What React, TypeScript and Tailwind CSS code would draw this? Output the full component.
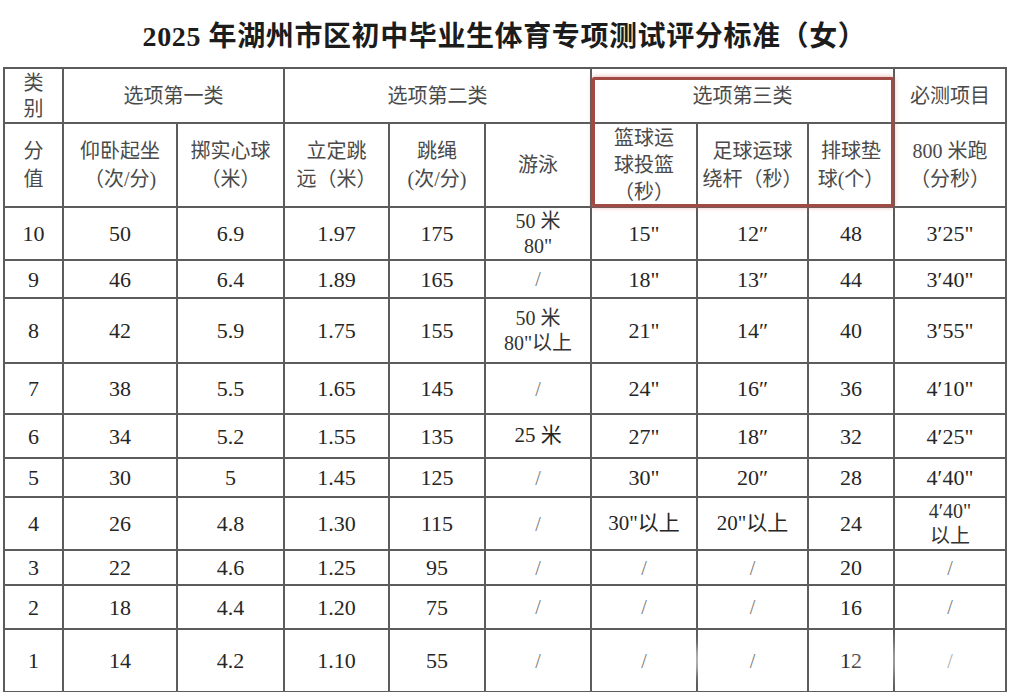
import React from "react";

type Cell = string | string[];

const cols = [59, 114, 107, 105, 96, 106, 106, 111, 86, 112];

const body: { h: number; cells: Cell[] }[] = [
  { h: 53, cells: ["10", "50", "6.9", "1.97", "175", ["50 米", "80\""], "15\"", "12″", "48", "3′25\""] },
  { h: 38, cells: ["9", "46", "6.4", "1.89", "165", "/", "18\"", "13″", "44", "3′40\""] },
  { h: 65, cells: ["8", "42", "5.9", "1.75", "155", ["50 米", "80\"以上"], "21\"", "14″", "40", "3′55\""] },
  { h: 51, cells: ["7", "38", "5.5", "1.65", "145", "/", "24\"", "16″", "36", "4′10\""] },
  { h: 44, cells: ["6", "34", "5.2", "1.55", "135", "25 米", "27\"", "18″", "32", "4′25\""] },
  { h: 39, cells: ["5", "30", "5", "1.45", "125", "/", "30\"", "20″", "28", "4′40\""] },
  { h: 53, cells: ["4", "26", "4.8", "1.30", "115", "/", "30\"以上", "20\"以上", "24", ["4′40\"", "以上"]] },
  { h: 35, cells: ["3", "22", "4.6", "1.25", "95", "/", "/", "/", "20", "/"] },
  { h: 44, cells: ["2", "18", "4.4", "1.20", "75", "/", "/", "/", "16", "/"] },
  { h: 63, cells: ["1", "14", "4.2", "1.10", "55", "/", "/", "/", "12", "/"] },
];

const td = "border-2 border-[#5c5c5c] p-0 text-center align-middle";

function Lines({ lines, lh = "leading-[27px]" }: { lines: string[]; lh?: string }) {
  return (
    <div className={`flex flex-col items-center ${lh}`}>
      {lines.map((l, i) => (
        <span key={i} className="whitespace-nowrap">
          {l}
        </span>
      ))}
    </div>
  );
}

function DataCell({ c }: { c: Cell }) {
  if (Array.isArray(c)) {
    return (
      <td className={`${td} text-[20px] text-[#333]`}>
        <Lines lines={c} lh="leading-[25px]" />
      </td>
    );
  }
  if (c === "/") {
    return <td className={`${td} text-[20px] text-[#777]`}>/</td>;
  }
  const hasCjk = /[\u4e00-\u9fff]/.test(c);
  return (
    <td className={`${td} whitespace-nowrap ${hasCjk ? "text-[21px]" : "text-[22px]"} text-[#262626]`}>{c}</td>
  );
}

export default function App() {
  return (
    <div className="h-[692px] w-[1009px] overflow-hidden bg-white font-['Liberation_Serif','Noto_Sans_CJK_SC',serif]">
      <div className="flex h-[67px] items-center justify-center pt-[6px]">
        <h1 className="text-[28px] font-bold tracking-[0.6px] text-[#1c1c1c]">
          2025 年湖州市区初中毕业生体育专项测试评分标准（女）
        </h1>
      </div>

      <div className="relative ml-[3px] w-[1002px]">
        <table className="w-[1002px] table-fixed border-collapse">
          <colgroup>
            {cols.map((w, i) => (
              <col key={i} style={{ width: w }} />
            ))}
          </colgroup>
          <tbody className="text-[#4a4a4a]">
            <tr className="h-[55px] text-[20px]">
              <td className={td}>
                <Lines lines={["类", "别"]} lh="leading-[26px]" />
              </td>
              <td className={td} colSpan={2}>选项第一类</td>
              <td className={td} colSpan={3}>选项第二类</td>
              <td className={td} colSpan={3}>选项第三类</td>
              <td className={td}>必测项目</td>
            </tr>
            <tr className="h-[84px] text-[20px]">
              <td className={td}>
                <Lines lines={["分", "值"]} lh="leading-[28px]" />
              </td>
              <td className={td}>
                <Lines lines={["仰卧起坐", "（次/分)"]} lh="leading-[28px]" />
              </td>
              <td className={td}>
                <Lines lines={["掷实心球", "（米）"]} lh="leading-[28px]" />
              </td>
              <td className={td}>
                <Lines lines={["立定跳", "远（米）"]} lh="leading-[28px]" />
              </td>
              <td className={td}>
                <Lines lines={["跳绳", "(次/分)"]} lh="leading-[28px]" />
              </td>
              <td className={td}>游泳</td>
              <td className={td}>
                <Lines lines={["篮球运", "球投篮", "（秒）"]} lh="leading-[27px]" />
              </td>
              <td className={td}>
                <Lines lines={["足球运球", "绕杆（秒）"]} lh="leading-[28px]" />
              </td>
              <td className={td}>
                <Lines lines={["排球垫", "球(个）"]} lh="leading-[28px]" />
              </td>
              <td className={td}>
                <Lines lines={["800 米跑", "（分秒）"]} lh="leading-[28px]" />
              </td>
            </tr>
            {body.map((r, i) => (
              <tr key={i} style={{ height: r.h }}>
                {r.cells.map((c, j) => (
                  <DataCell key={j} c={c} />
                ))}
              </tr>
            ))}
          </tbody>
        </table>

        {/* red highlight around 选项第三类 */}
        <div className="pointer-events-none absolute left-[589px] top-[10px] h-[130px] w-[302px] rounded-[2px] border-[3px] border-[#a14a44] shadow-[0_0_5px_rgba(210,90,90,0.55)]" />

        {/* faint watermark blur at bottom */}
        <div className="pointer-events-none absolute left-[655px] top-[580px] h-[26px] w-[60px] rounded-full bg-white/50 blur-[6px]" />
        <div className="pointer-events-none absolute left-[850px] top-[578px] h-[30px] w-[140px] rounded-full bg-white/40 blur-[8px]" />
      </div>
    </div>
  );
}
